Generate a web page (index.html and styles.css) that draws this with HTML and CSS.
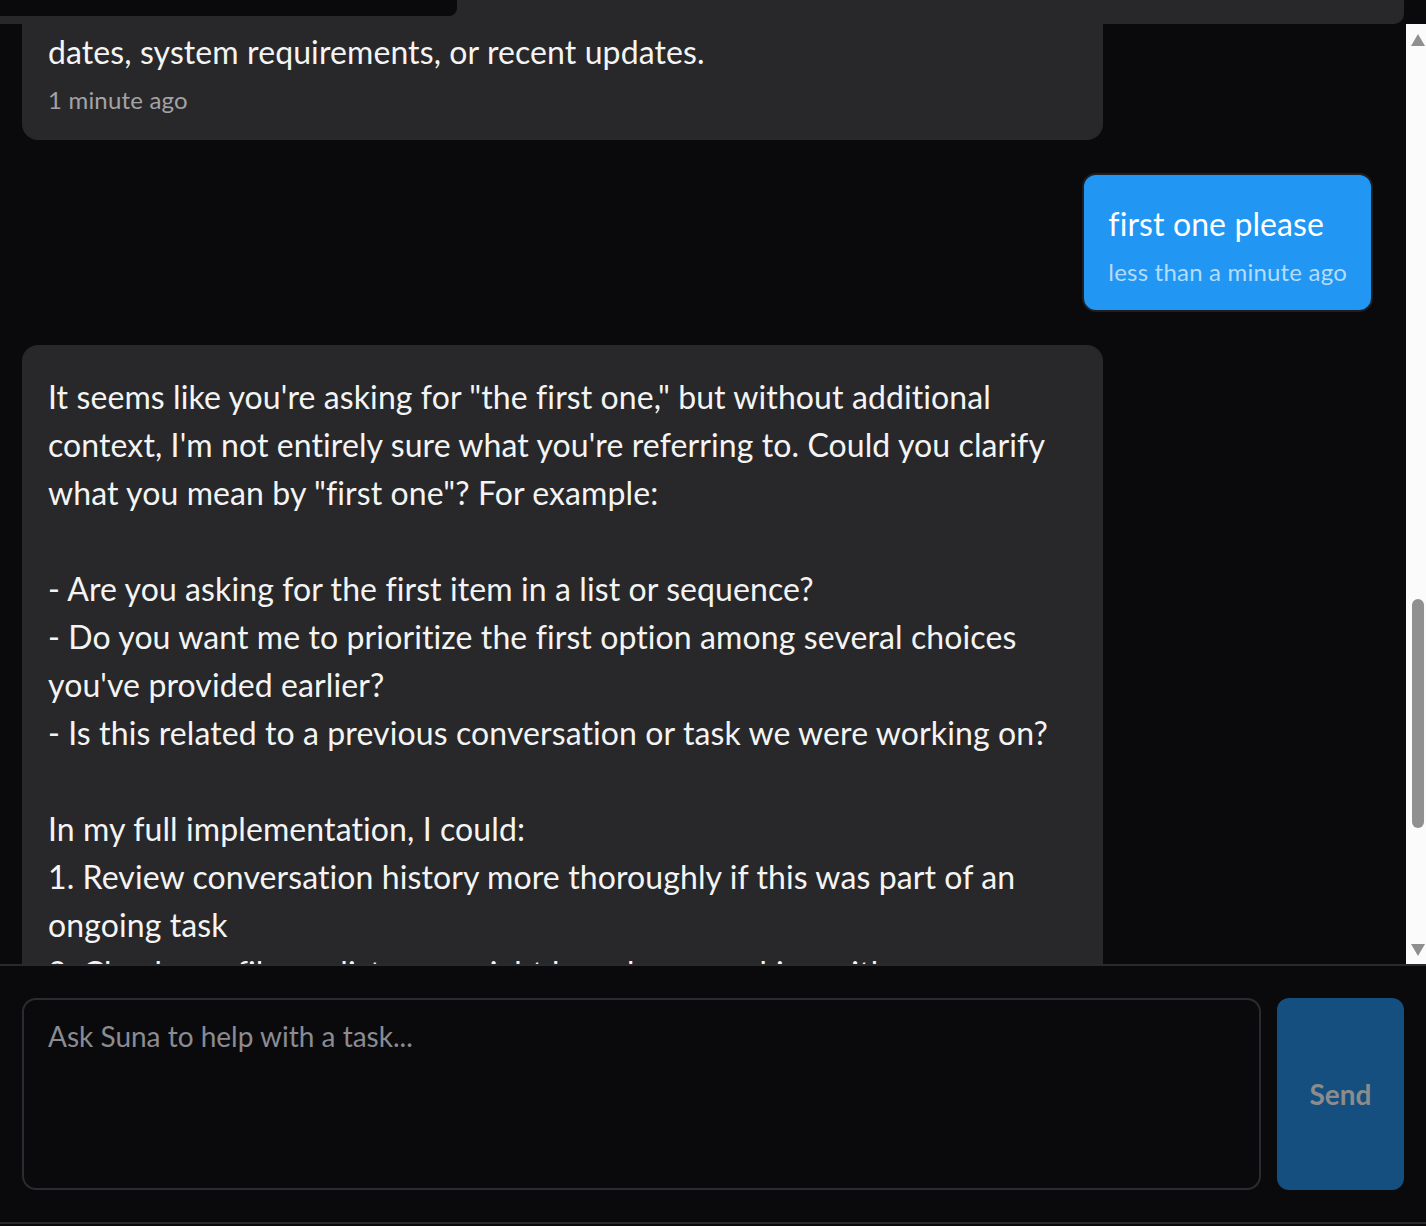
FILE: index.html
```html
<!DOCTYPE html>
<html lang="en">
<head>
<meta charset="utf-8">
<title>Suna chat</title>
<link rel="stylesheet" href="styles.css">
</head>
<body>
<div class="app">
  <div class="topbar"><div class="topbar-tab"></div></div>
  <div class="main">
    <div class="viewport">
      <div class="thread">
        <div class="msg msg-assistant msg-clipped">
          <div class="msg-text">dates, system requirements, or recent updates.</div>
          <div class="msg-time">1 minute ago</div>
        </div>
        <div class="msg msg-user">
          <div class="msg-text">first one please</div>
          <div class="msg-time">less than a minute ago</div>
        </div>
        <div class="msg msg-assistant">
          <div class="msg-text">It seems like you're asking for "the first one," but without additional
context, I'm not entirely sure what you're referring to. Could you clarify
what you mean by "first one"? For example:

- Are you asking for the first item in a list or sequence?
- Do you want me to prioritize the first option among several choices
you've provided earlier?
- Is this related to a previous conversation or task we were working on?

In my full implementation, I could:
1. Review conversation history more thoroughly if this was part of an
ongoing task
2. Check any files or lists you might have been working with
3. Look at previous steps in our conversation</div>
        </div>
      </div>
    </div>
    <div class="scrollbar">
      <div class="sb-arrow sb-up"></div>
      <div class="sb-track"><div class="sb-thumb"></div></div>
      <div class="sb-arrow sb-down"></div>
    </div>
  </div>
  <div class="composer">
    <textarea class="composer-input" placeholder="Ask Suna to help with a task..."></textarea>
    <button class="composer-send" type="button">Send</button>
  </div>
</div>
</body>
</html>
```

FILE: styles.css
```css
* { box-sizing: border-box; }
html, body {
  margin: 0;
  padding: 0;
  background: #0a0a0c;
}
body {
  font-family: "Lato", "Open Sans", sans-serif;
  color: #f2f2f2;
  overflow: hidden;
}
.app {
  height: 1226px;
  display: flex;
  flex-direction: column;
}
.topbar {
  height: 24px;
  margin-right: 22px;
  background: #28282a;
  border-bottom-right-radius: 10px;
  flex: none;
}
.topbar-tab {
  width: 457px;
  height: 16px;
  background: #0a0a0c;
  border-bottom-right-radius: 8px;
}
.main {
  height: 940px;
  display: flex;
  flex: none;
}
.viewport {
  flex: 1;
  overflow: hidden;
}
.thread {
  display: flex;
  flex-direction: column;
  gap: 33px;
  padding: 0 33px 0 22px;
}
.msg {
  border: 2px solid #28282a;
  background: #28282a;
  border-radius: 16px;
  padding: 26px 24px 20px;
  max-width: 80%;
}
.msg-clipped {
  border-top: 0;
  border-top-left-radius: 0;
  border-top-right-radius: 0;
  padding-top: 4px;
}
.msg-assistant {
  align-self: flex-start;
  width: 80%;
}
.msg-user {
  align-self: flex-end;
  background: #2196f3;
  border-color: #1f1f22;
  border-radius: 14px;
  padding: 25px 24px 20px;
}
.msg-text {
  font-size: 32px;
  line-height: 48px;
  letter-spacing: 0.1px;
  white-space: pre;
  color: #f4f4f4;
}
.msg-user .msg-text { color: #ffffff; }
.msg-time {
  margin-top: 6px;
  font-size: 24px;
  line-height: 36px;
  letter-spacing: 0.2px;
  color: #a3a3a6;
}
.msg-user .msg-time { color: #b5dcfb; }
.scrollbar {
  width: 20px;
  background: #fbfbfb;
  display: flex;
  flex-direction: column;
  align-items: center;
  padding: 10px 0 8px 4px;
}
.sb-arrow {
  width: 0;
  height: 0;
  border-left: 7px solid transparent;
  border-right: 7px solid transparent;
}
.sb-up { border-bottom: 12px solid #8f8f8f; }
.sb-down { border-top: 12px solid #8f8f8f; }
.sb-track {
  flex: 1;
  width: 100%;
  padding: 553px 2px 0 2px;
}
.sb-thumb {
  height: 229px;
  border-radius: 6px;
  background: #909090;
}
.composer {
  flex: none;
  display: flex;
  gap: 16px;
  padding: 32px 22px;
  border-top: 2px solid #2a2a2d;
  border-bottom: 2px solid #2a2a2d;
  height: 260px;
}
.composer-input {
  flex: 1;
  height: 192px;
  resize: none;
  background: #0a0a0c;
  border: 2px solid #2c2c30;
  border-radius: 14px;
  padding: 16px 24px;
  font-family: "Lato", "Open Sans", sans-serif;
  font-size: 28px;
  line-height: 40px;
  color: #f2f2f2;
  outline: none;
}
.composer-input::placeholder { color: #8b8b92; }
.composer-send {
  width: 127px;
  height: 192px;
  border: 0;
  border-radius: 12px;
  background: #154f7f;
  color: #8c8c8c;
  font-family: "Lato", "Open Sans", sans-serif;
  font-weight: 700;
  font-size: 28px;
}
```
